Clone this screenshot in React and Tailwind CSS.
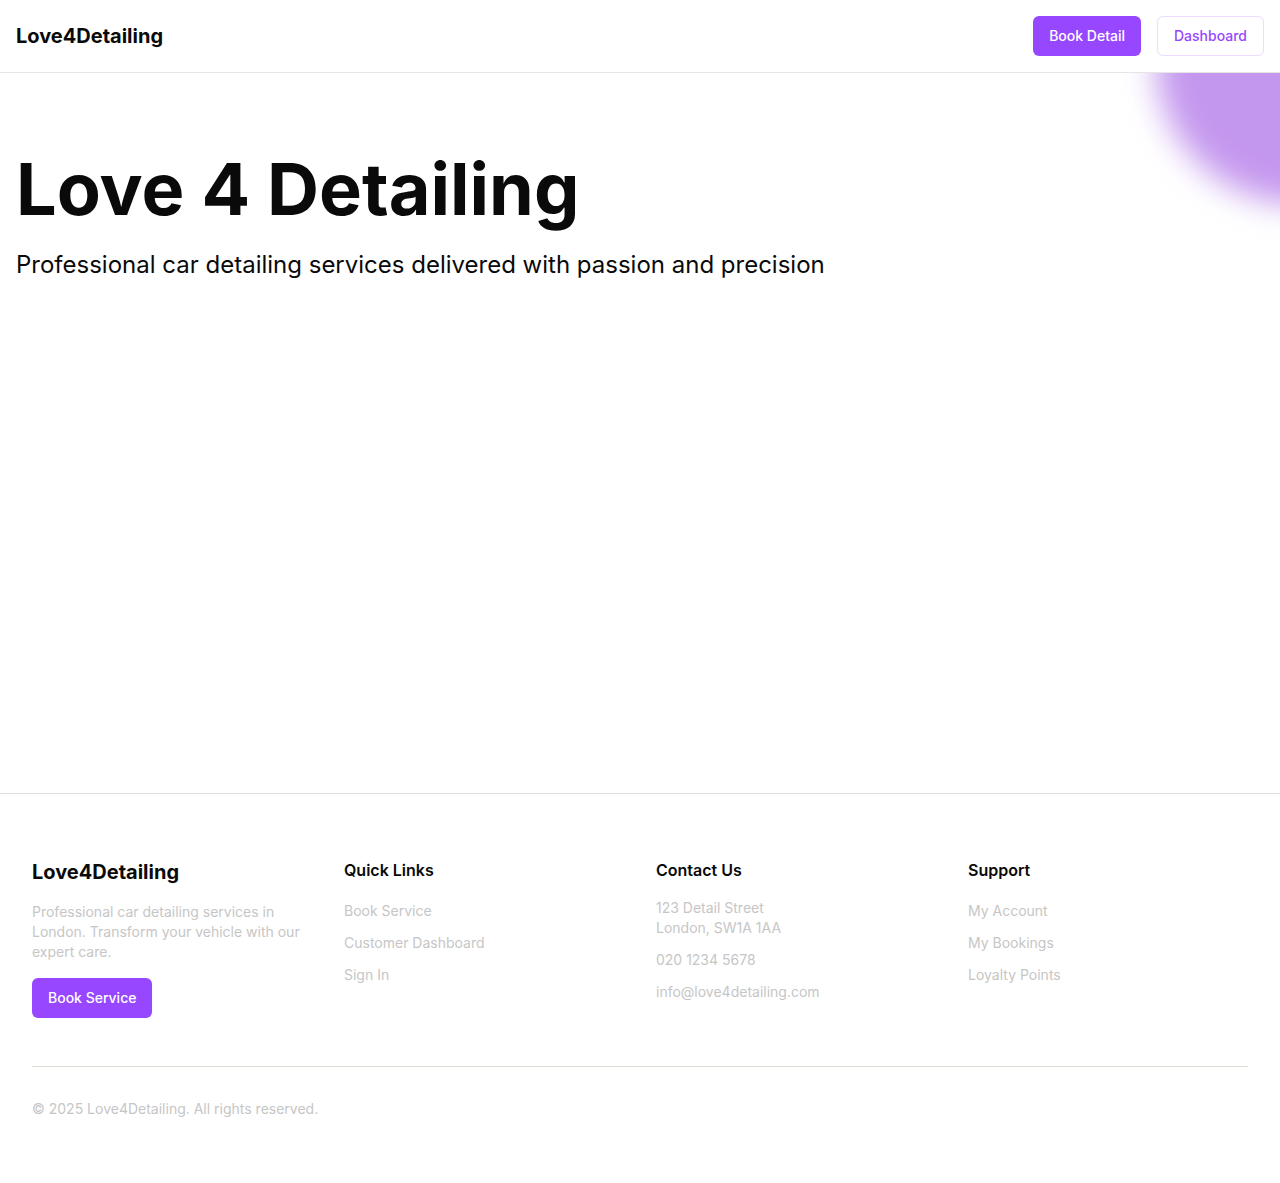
export default function App() {
  const font = { fontFamily: "Inter, 'Noto Sans', sans-serif" };
  return (
    <div className="min-h-screen bg-white text-[#0a0a0a] font-['Inter',sans-serif]" style={font}>
      <header className="h-[73px] border-b border-[#e5e5e5] flex items-center justify-between px-4">
        <div className="text-xl font-bold">Love4Detailing</div>
        <div className="flex items-center gap-4">
          <button className="h-10 px-4 rounded-md bg-[#9747ff] text-white text-sm font-medium">Book Detail</button>
          <button className="h-10 px-4 rounded-md border border-[#ecdcff] text-[#9747ff] text-sm font-medium">Dashboard</button>
        </div>
      </header>
      <main className="relative overflow-hidden h-[720px]">
        <div className="absolute top-[-157px] right-[-164px] w-[288px] h-[288px] rounded-full bg-[#c497ee] blur-lg"></div>
        <section className="relative px-4 pt-20">
          <h1 className="text-7xl leading-none font-bold">Love 4 Detailing</h1>
          <p className="mt-6 text-2xl leading-8">Professional car detailing services delivered with passion and precision</p>
        </section>
      </main>
      <footer className="border-t border-[#e0e0e0] px-8 pt-16 pb-16">
        <div className="grid grid-cols-4 gap-8">
          <div>
            <div className="text-xl font-bold">Love4Detailing</div>
            <p className="mt-4 text-sm leading-5 text-[#c6c6c6]">Professional car detailing services in London. Transform your vehicle with our expert care.</p>
            <button className="mt-4 h-10 px-4 rounded-md bg-[#9747ff] text-white text-sm font-medium">Book Service</button>
          </div>
          <div>
            <h3 className="text-base font-semibold leading-6">Quick Links</h3>
            <ul className="mt-[19px] space-y-3 text-sm leading-5 text-[#c6c6c6]">
              <li>Book Service</li>
              <li>Customer Dashboard</li>
              <li>Sign In</li>
            </ul>
          </div>
          <div>
            <h3 className="text-base font-semibold leading-6">Contact Us</h3>
            <div className="mt-4 space-y-3 text-sm leading-5 text-[#c6c6c6]">
              <p>123 Detail Street<br />London, SW1A 1AA</p>
              <p>020 1234 5678</p>
              <p>info@love4detailing.com</p>
            </div>
          </div>
          <div>
            <h3 className="text-base font-semibold leading-6">Support</h3>
            <ul className="mt-[19px] space-y-3 text-sm leading-5 text-[#c6c6c6]">
              <li>My Account</li>
              <li>My Bookings</li>
              <li>Loyalty Points</li>
            </ul>
          </div>
        </div>
        <div className="mt-12 border-t border-[#e2ddd5] pt-8 text-sm leading-5 text-[#c6c6c6]">© 2025 Love4Detailing. All rights reserved.</div>
      </footer>
    </div>
  );
}
